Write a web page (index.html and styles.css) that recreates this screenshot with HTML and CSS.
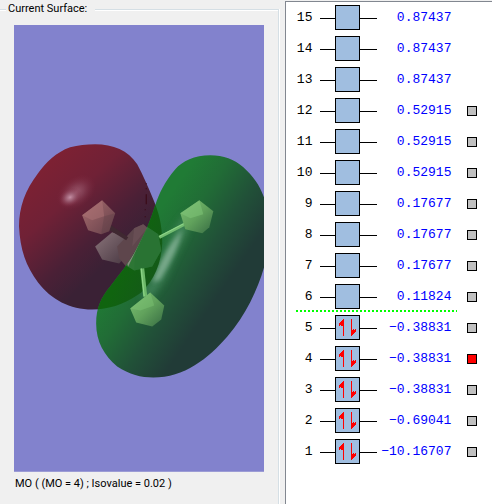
FILE: index.html
```
<!DOCTYPE html>
<html lang="en">
<head>
    <meta charset="UTF-8">
    <meta name="viewport" content="width=device-width, initial-scale=1.0">
    <title>MO Editor</title>
    <link rel="stylesheet" href="styles.css">
</head>
<body>
    <fieldset class="surface">
        <legend>Current Surface:</legend>

        <svg class="viewer" viewBox="14 25 250 446" role="img" aria-label="Molecular orbital 4">
            <defs>
                <linearGradient id="red" gradientUnits="userSpaceOnUse" x1="45" y1="165" x2="122" y2="250">
                    <stop offset="0" stop-color="#7d2133"/>
                    <stop offset="0.35" stop-color="#702136"/>
                    <stop offset="0.75" stop-color="#4a2036"/>
                    <stop offset="1" stop-color="#3a2135"/>
                </linearGradient>
                <linearGradient id="green" gradientUnits="userSpaceOnUse" x1="145" y1="230" x2="225" y2="285">
                    <stop offset="0" stop-color="#207b35"/>
                    <stop offset="0.3" stop-color="#216c36"/>
                    <stop offset="0.65" stop-color="#215138"/>
                    <stop offset="1" stop-color="#213b37"/>
                </linearGradient>
                <linearGradient id="overlap" gradientUnits="userSpaceOnUse" x1="115" y1="285" x2="150" y2="300">
                    <stop offset="0" stop-color="#10640f"/>
                    <stop offset="1" stop-color="#15581a"/>
                </linearGradient>
                <radialGradient id="shine">
                    <stop offset="0" stop-color="#c590a5"/>
                    <stop offset="0.4" stop-color="#a06378" stop-opacity="0.8"/>
                    <stop offset="1" stop-color="#802840" stop-opacity="0"/>
                </radialGradient>
                <linearGradient id="pinkAtom" x1="0" y1="0" x2="1" y2="1">
                    <stop offset="0" stop-color="#a86c6e"/>
                    <stop offset="1" stop-color="#65404a"/>
                </linearGradient>
                <linearGradient id="grayAtom" x1="0" y1="0" x2="1" y2="1">
                    <stop offset="0" stop-color="#8a747a"/>
                    <stop offset="1" stop-color="#4a3943"/>
                </linearGradient>
                <linearGradient id="greenAtom" x1="0" y1="0" x2="1" y2="1">
                    <stop offset="0" stop-color="#7bc073"/>
                    <stop offset="0.5" stop-color="#61a25c"/>
                    <stop offset="1" stop-color="#376c43"/>
                </linearGradient>
                <filter id="soft" x="-50%" y="-50%" width="200%" height="200%">
                    <feGaussianBlur stdDeviation="4"/>
                </filter>
                <filter id="softer" x="-50%" y="-50%" width="200%" height="200%">
                    <feGaussianBlur stdDeviation="2"/>
                </filter>
                <path id="redLobe" d="M95 144C86 144 78 145 70 147C56 152 46 162 38 173C25 190 19 207 19 226C20 249 26 266 38 282C51 299 70 309 92 309C112 309 129 301 141 292C154 280 161 263 162 243C162 223 158 211 153 199C148 187 143 175 137 164C128 150 113 144 95 144Z"/>
                <path id="greenLobe" d="M210 155C194 155 182 161 175 169C164 182 159 193 155 205C150 220 146 231 137 247C129 263 118 275 110 286C101 297 96 307 96 323C96 341 104 355 117 366C129 374 141 377 153 377C184 377 208 358 227 336C247 313 259 285 265 262V201C260 186 254 177 243 167C234 159 223 155 210 155Z"/>
                <clipPath id="insideRed"><use href="#redLobe"/></clipPath>
                <clipPath id="insideGreen"><use href="#greenLobe"/></clipPath>
            </defs>

            <rect x="14" y="25" width="250" height="446" fill="#8282cd"/>

            <!-- negative lobe -->
            <use href="#redLobe" fill="url(#red)"/>
            <ellipse cx="76" cy="192" rx="22" ry="15" fill="url(#shine)" opacity="0.5" transform="rotate(-38 76 192)"/>
            <ellipse cx="70" cy="197" rx="12" ry="9" fill="url(#shine)" transform="rotate(-30 70 197)"/>

            <!-- atoms inside the negative lobe -->
            <path d="M95 246L112 232L124 236L126 255L119 263L102 259Z" fill="url(#grayAtom)"/>
            <path d="M117 246L134 228L143 224L148 228L126 266L119 258Z" fill="#5e464c"/>
            <path d="M134 228L143 224L147 228L132 246Z" fill="#684e54"/>
            <path d="M111 225L128 237L126 240L108 229Z" fill="#3f2831"/>
            <path d="M82 215L102 200L115 213L109 231L101 234L88 230Z" fill="url(#pinkAtom)"/>
            <path d="M82 215L102 200L104 216L92 220Z" fill="#ad7475" opacity="0.5"/>
            <path d="M104 216L115 213L109 231L101 234Z" fill="#573b43" opacity="0.3"/>
            <path d="M146 183V184M146 188V189M146 194V204M145 209V210M145 216V217" stroke="#380712"/>

            <!-- positive lobe -->
            <use href="#greenLobe" fill="url(#green)"/>
            <g clip-path="url(#insideGreen)">
                <path d="M144 292Q161 269 166 250Q174 226 190 211L186 232Q174 255 165 276Q157 290 144 303Z" fill="#55956f" opacity="0.7" filter="url(#soft)"/>
                <path d="M152 282Q163 250 182 230Q177 252 160 279Z" fill="#87b398" opacity="0.8" filter="url(#softer)"/>
                <use href="#redLobe" fill="url(#overlap)"/>
                <g clip-path="url(#insideRed)">
                    <path d="M117 246L143 224L158 234L161 250L152 266L134 270L124 264Z" fill="#2d7635"/>
                    <path d="M136 241L149 228L158 234L161 250L152 266L134 270Z" fill="#277132" opacity="0.6"/>
                </g>
                <path d="M147 227L128 266L126 260L144 226Z" fill="#8b8b82"/>
            </g>

            <!-- bonds and atoms inside the positive lobe -->
            <path d="M159 237L184 224" stroke="#72bb70" stroke-width="3"/>
            <path d="M159 236L184 223" stroke="#91d88b"/>
            <path d="M142 268L145 296" stroke="#6cb869" stroke-width="4"/>
            <path d="M141 268L144 296" stroke="#91d88b"/>
            <path d="M180 213L199 200L213 211L209 227L202 233L185 229Z" fill="url(#greenAtom)"/>
            <path d="M180 213L199 200L203 214L190 218Z" fill="#81c779" opacity="0.5"/>
            <path d="M130 308L150 292L164 305L161 319L152 326L136 322Z" fill="url(#greenAtom)"/>
            <path d="M130 308L150 292L154 305L140 310Z" fill="#81c779" opacity="0.4"/>
        </svg>

        <p class="caption">MO ( (MO = 4) ; Isovalue = 0.02 )</p>
    </fieldset>

    <main class="orbitals">
        <!-- shared drawings for the energy levels -->
        <svg class="shapes" aria-hidden="true">
            <symbol id="empty" viewBox="0 0 57 25">
                <path d="M0 13.5H57" stroke="#000"/>
                <rect x="15.5" y="0.5" width="24" height="24" fill="#a0bee0" stroke="#000"/>
            </symbol>
            <symbol id="filled" viewBox="0 0 57 25">
                <use href="#empty"/>
                <path d="M23 4H24V21H23ZM31 4H32V21H31Z" fill="#f00"/>
                <path d="M24 4H23L19 9V11H20L21 9V11H22L23 10H24ZM31 21H32L36 16V14H35L34 16V14H33L32 15H31Z" fill="#f00"/>
            </symbol>
        </svg>

        <table>
            <tr><th>15</th><td><svg class="level"><use href="#empty"/></svg></td><td class="energy">0.87437</td><td></td></tr>
            <tr><th>14</th><td><svg class="level"><use href="#empty"/></svg></td><td class="energy">0.87437</td><td></td></tr>
            <tr><th>13</th><td><svg class="level"><use href="#empty"/></svg></td><td class="energy">0.87437</td><td></td></tr>
            <tr><th>12</th><td><svg class="level"><use href="#empty"/></svg></td><td class="energy">0.52915</td><td><input type="radio" name="mo" aria-label="MO 12"></td></tr>
            <tr><th>11</th><td><svg class="level"><use href="#empty"/></svg></td><td class="energy">0.52915</td><td><input type="radio" name="mo" aria-label="MO 11"></td></tr>
            <tr><th>10</th><td><svg class="level"><use href="#empty"/></svg></td><td class="energy">0.52915</td><td><input type="radio" name="mo" aria-label="MO 10"></td></tr>
            <tr><th>9</th><td><svg class="level"><use href="#empty"/></svg></td><td class="energy">0.17677</td><td><input type="radio" name="mo" aria-label="MO 9"></td></tr>
            <tr><th>8</th><td><svg class="level"><use href="#empty"/></svg></td><td class="energy">0.17677</td><td><input type="radio" name="mo" aria-label="MO 8"></td></tr>
            <tr><th>7</th><td><svg class="level"><use href="#empty"/></svg></td><td class="energy">0.17677</td><td><input type="radio" name="mo" aria-label="MO 7"></td></tr>
            <tr class="lumo"><th>6</th><td><svg class="level"><use href="#empty"/></svg></td><td class="energy">0.11824</td><td><input type="radio" name="mo" aria-label="MO 6"></td></tr>
            <tr><th>5</th><td><svg class="level"><use href="#filled"/></svg></td><td class="energy">−0.38831</td><td><input type="radio" name="mo" aria-label="MO 5"></td></tr>
            <tr><th>4</th><td><svg class="level"><use href="#filled"/></svg></td><td class="energy">−0.38831</td><td><input type="radio" name="mo" aria-label="MO 4" checked></td></tr>
            <tr><th>3</th><td><svg class="level"><use href="#filled"/></svg></td><td class="energy">−0.38831</td><td><input type="radio" name="mo" aria-label="MO 3"></td></tr>
            <tr><th>2</th><td><svg class="level"><use href="#filled"/></svg></td><td class="energy">−0.69041</td><td><input type="radio" name="mo" aria-label="MO 2"></td></tr>
            <tr><th>1</th><td><svg class="level"><use href="#filled"/></svg></td><td class="energy">−10.16707</td><td><input type="radio" name="mo" aria-label="MO 1"></td></tr>
        </table>
    </main>
</body>
</html>
```
FILE: styles.css
```
body {
    display: grid;
    grid-template-columns: 23fr 17fr;
    gap: 6px;
    box-sizing: border-box;
    min-height: 100vh;
    margin: 0;
    background-color: #f0f0f0;
    font-family: Roboto, "Liberation Sans", sans-serif;
    font-size: 11px;
    line-height: 16px;
    color: #000;
}

/* Group box on the left */
.surface {
    min-width: 0;
    margin: 1px 0 0;
    padding: 8px 14px 0;
    border: 0 solid #d5dfe5;
    border-width: 1px 1px 0 0;
    box-shadow: 1px 0 #fff, inset 0 1px #fff;
}

.surface legend {
    margin-left: -8px;
    padding: 0 8px 0 2px;
    background-color: #f0f0f0;
}

.viewer {
    display: block;
    width: 100%;
}

.caption {
    margin: 4px 0 0 1px;
}

/* Orbital list on the right */
.orbitals {
    min-width: 0;
    margin-top: 1px;
    padding-left: 10px;
    background-color: #fff;
    border: 0 solid #828790;
    border-width: 1px 0 0 1px;
}

.shapes {
    display: none;
}

.orbitals table {
    border-collapse: collapse;
    font-family: "Liberation Mono", monospace;
    font-size: 13px;
}

.orbitals tr {
    height: 31px;
}

.orbitals th,
.orbitals td {
    padding: 0;
    font-weight: normal;
}

.orbitals th {
    width: 16px;
    padding-right: 8px;
    text-align: right;
}

.level {
    display: block;
    width: 57px;
    height: 25px;
    shape-rendering: crispEdges;
}

.orbitals .energy {
    width: 74px;
    padding-right: 16px;
    text-align: right;
    color: #00f;
}

/* Dotted line between empty and occupied orbitals */
.lumo {
    background: repeating-linear-gradient(to right, #0f0 0 2px, transparent 2px 4px) left bottom / 161px 2px no-repeat;
}

.orbitals input {
    display: block;
    appearance: none;
    box-sizing: border-box;
    width: 10px;
    height: 10px;
    margin: 0;
    background-color: #c0c0c0;
    border: 1px solid #000;
}

.orbitals input:checked {
    background-color: #f00;
}
```
